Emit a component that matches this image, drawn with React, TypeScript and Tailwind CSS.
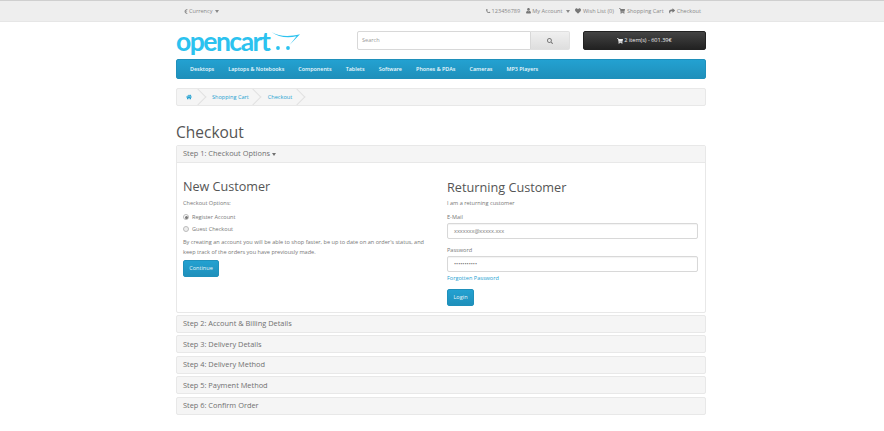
import React from 'react';
import { FaEuroSign, FaHeart, FaHome, FaPhone, FaSearch, FaShare, FaShoppingCart, FaUser } from 'react-icons/fa';

const FONT = "font-['Open_Sans',sans-serif]";

const MENU = ['Desktops', 'Laptops & Notebooks', 'Components', 'Tablets', 'Software', 'Phones & PDAs', 'Cameras', 'MP3 Players'];
const STEPS = ['Step 2: Account & Billing Details', 'Step 3: Delivery Details', 'Step 4: Delivery Method', 'Step 5: Payment Method', 'Step 6: Confirm Order'];

const Caret = () => (
  <span className="inline-block w-0 h-0 border-x-[2.5px] border-x-transparent border-t-[3px] border-t-current ml-[2px] align-middle" />
);

const TopLink: React.FC<{ icon: React.ReactNode; label: string; caret?: boolean }> = ({ icon, label, caret }) => (
  <span className="flex items-center gap-[1.5px]">
    {icon}
    <span>{label}</span>
    {caret && <Caret />}
  </span>
);

const Crumb: React.FC<{ children: React.ReactNode; first?: boolean }> = ({ children, first }) => (
  <div className={`relative flex items-center h-full text-[#23a1d1] text-[5.57px] ${first ? 'w-[20.5px] pl-[9px]' : 'pl-[14.5px] pr-[4.5px]'}`}>
    {children}
    <span className="absolute right-[-6px] top-[2px] w-[12px] h-[12px] rotate-45 border-t border-r border-[#e2e2e2]" />
  </div>
);

const Field: React.FC<{ label: string; value: string }> = ({ label, value }) => (
  <div>
    <div className="text-[5.57px] leading-[8px] text-[#777]">{label}</div>
    <div className="mt-[2px] h-[16px] w-[251px] rounded-[2px] border border-[#d8d8d8] bg-white shadow-[inset_0_1px_1px_rgba(0,0,0,0.05)] flex items-center pl-[6px] text-[5.57px] text-[#777]">
      {value}
    </div>
  </div>
);

const BlueButton: React.FC<{ label: string; className: string }> = ({ label, className }) => (
  <div className={`h-[16.5px] rounded-[2px] border border-[#1f90bb] bg-gradient-to-b from-[#23a1d1] to-[#1f90bb] text-[#e8f6fb] text-[5.57px] flex items-center justify-center ${className}`}>
    {label}
  </div>
);

export default function App() {
  return (
    <div className={`${FONT} w-[884px] h-[431px] bg-white overflow-hidden text-[#777]`}>
      <div className="h-[22px] bg-[#eeeeee] border-t border-[#cfcfcf] border-b border-b-[#e6e6e6]">
        <div className="w-[530px] ml-[176px] h-full flex items-center justify-between pl-[8px] pr-[5px] text-[5.57px] text-[#888]">
          <span className="flex items-center gap-[1px]">
            <FaEuroSign className="w-[4px] h-[5px]" />
            <span>Currency</span>
            <Caret />
          </span>
          <div className="flex items-center gap-[5.5px]">
            <TopLink icon={<FaPhone className="w-[4.5px] h-[4.5px] scale-x-[-1]" />} label="123456789" />
            <TopLink icon={<FaUser className="w-[5px] h-[5.5px] text-[#777]" />} label="My Account" caret />
            <TopLink icon={<FaHeart className="w-[6px] h-[6px] text-[#777]" />} label="Wish List (0)" />
            <TopLink icon={<FaShoppingCart className="w-[6px] h-[6px] text-[#777]" />} label="Shopping Cart" />
            <TopLink icon={<FaShare className="w-[6px] h-[6px] text-[#777]" />} label="Checkout" />
          </div>
        </div>
      </div>

      <div className="w-[530px] ml-[176px]">
        <div className="flex items-center mt-[6px] h-[25px]">
          <div className="w-[181px] flex items-center">
            <span className="font-['Lato',sans-serif] font-bold text-[26.5px] leading-[24px] tracking-[-1.5px] text-[#2cc2ef]">opencart</span>
            <svg width="30" height="20" viewBox="0 0 30 20" className="ml-[2px] mt-[1px]">
              <path d="M0.5 1C8 5.5 18 6 29 3.2L18.5 14C21 11 23.5 8 25.5 5.3 16 7.5 7 6 0.5 1z" fill="#2cc2ef" />
              <circle cx="7" cy="17" r="1.9" fill="#2cc2ef" />
              <circle cx="17" cy="17" r="1.9" fill="#2cc2ef" />
            </svg>
          </div>
          <div className="w-[213px] h-[19px] flex">
            <div className="w-[174px] border border-[#d8d8d8] rounded-l-[2px] bg-white flex items-center pl-[4px] text-[5.57px] text-[#999]">Search</div>
            <div className="flex-1 rounded-r-[2px] border border-l-0 border-[#e0e0e0] bg-gradient-to-b from-[#f0f0f0] to-[#dedede] flex items-center justify-center">
              <FaSearch className="w-[6px] h-[6px] text-[#777]" />
            </div>
          </div>
          <div className="ml-[13px] w-[123px] h-[19px] rounded-[2px] border border-[#222] bg-gradient-to-b from-[#444] to-[#222] flex items-center justify-center gap-[1px] text-[#eee] text-[5.57px]">
            <FaShoppingCart className="w-[6px] h-[6px]" />
            2 item(s) - 601.39€
          </div>
        </div>

        <div className="mt-[6px] h-[20px] rounded-[2px] border border-[#1f90bb] bg-gradient-to-b from-[#23a1d1] to-[#1f90bb] flex items-center pl-[13px] gap-[14.1px] text-[#eef9fd] text-[5.4px] font-semibold">
          {MENU.map(m => (
            <span key={m}>{m}</span>
          ))}
        </div>

        <div className="mt-[9px] h-[18px] rounded-[2px] border border-[#e8e8e8] bg-[#f5f5f5] flex items-center overflow-hidden">
          <Crumb first><FaHome className="w-[6px] h-[6px]" /></Crumb>
          <Crumb>Shopping Cart</Crumb>
          <Crumb>Checkout</Crumb>
        </div>

        <h1 className="mt-[15px] text-[15.5px] leading-[22px] text-[#555]">Checkout</h1>

        <div className="mt-[2px] rounded-[2px] border border-[#e8e8e8] h-[168px]">
          <div className="h-[17px] bg-[#f5f5f5] border-b border-[#e8e8e8] pl-[6px] flex items-center text-[7.4px] text-[#707070]">
            Step 1: Checkout Options <Caret />
          </div>
          <div className="flex pl-[6px] pr-[7px] pt-[15px]">
            <div className="w-[264px]">
              <h2 className="text-[12.6px] leading-[18px] text-[#555]">New Customer</h2>
              <div className="mt-[3px] text-[5.57px] leading-[8px]">Checkout Options:</div>
              <div className="mt-[6px] flex items-center gap-[3px] text-[5.57px] leading-[8px]">
                <span className="w-[6px] h-[6px] rounded-full border border-[#bbb] bg-white flex items-center justify-center"><span className="w-[3px] h-[3px] rounded-full bg-[#777]" /></span>
                Register Account
              </div>
              <div className="mt-[4px] flex items-center gap-[3px] text-[5.57px] leading-[8px]">
                <span className="w-[6px] h-[6px] rounded-full border border-[#bbb] bg-[#eee]" />
                Guest Checkout
              </div>
              <p className="mt-[4px] w-[244px] text-[5.57px] leading-[10px]">
                By creating an account you will be able to shop faster, be up to date on an order's status, and keep track of the orders you have previously made.
              </p>
              <BlueButton label="Continue" className="mt-[3px] w-[36px]" />
            </div>
            <div className="w-[251px]">
              <h2 className="text-[12.7px] leading-[18px] text-[#555]">Returning Customer</h2>
              <div className="mt-[3px] text-[5.57px] leading-[8px]">I am a returning customer</div>
              <div className="mt-[6px] flex flex-col gap-[7px]">
                <Field label="E-Mail" value="xxxxxxx@xxxxx.xxx" />
                <Field label="Password" value="•••••••••••" />
              </div>
              <div className="mt-[2px] text-[5.57px] leading-[8px] text-[#23a1d1]">Forgotten Password</div>
              <BlueButton label="Login" className="mt-[7px] w-[27px]" />
            </div>
          </div>
        </div>

        <div className="mt-[2px] flex flex-col gap-[2.4px]">
          {STEPS.map(s => (
            <div key={s} className="h-[18px] rounded-[2px] border border-[#e8e8e8] bg-[#f5f5f5] pl-[6px] flex items-center text-[7.4px] text-[#707070]">
              {s}
            </div>
          ))}
        </div>
      </div>
    </div>
  );
}
